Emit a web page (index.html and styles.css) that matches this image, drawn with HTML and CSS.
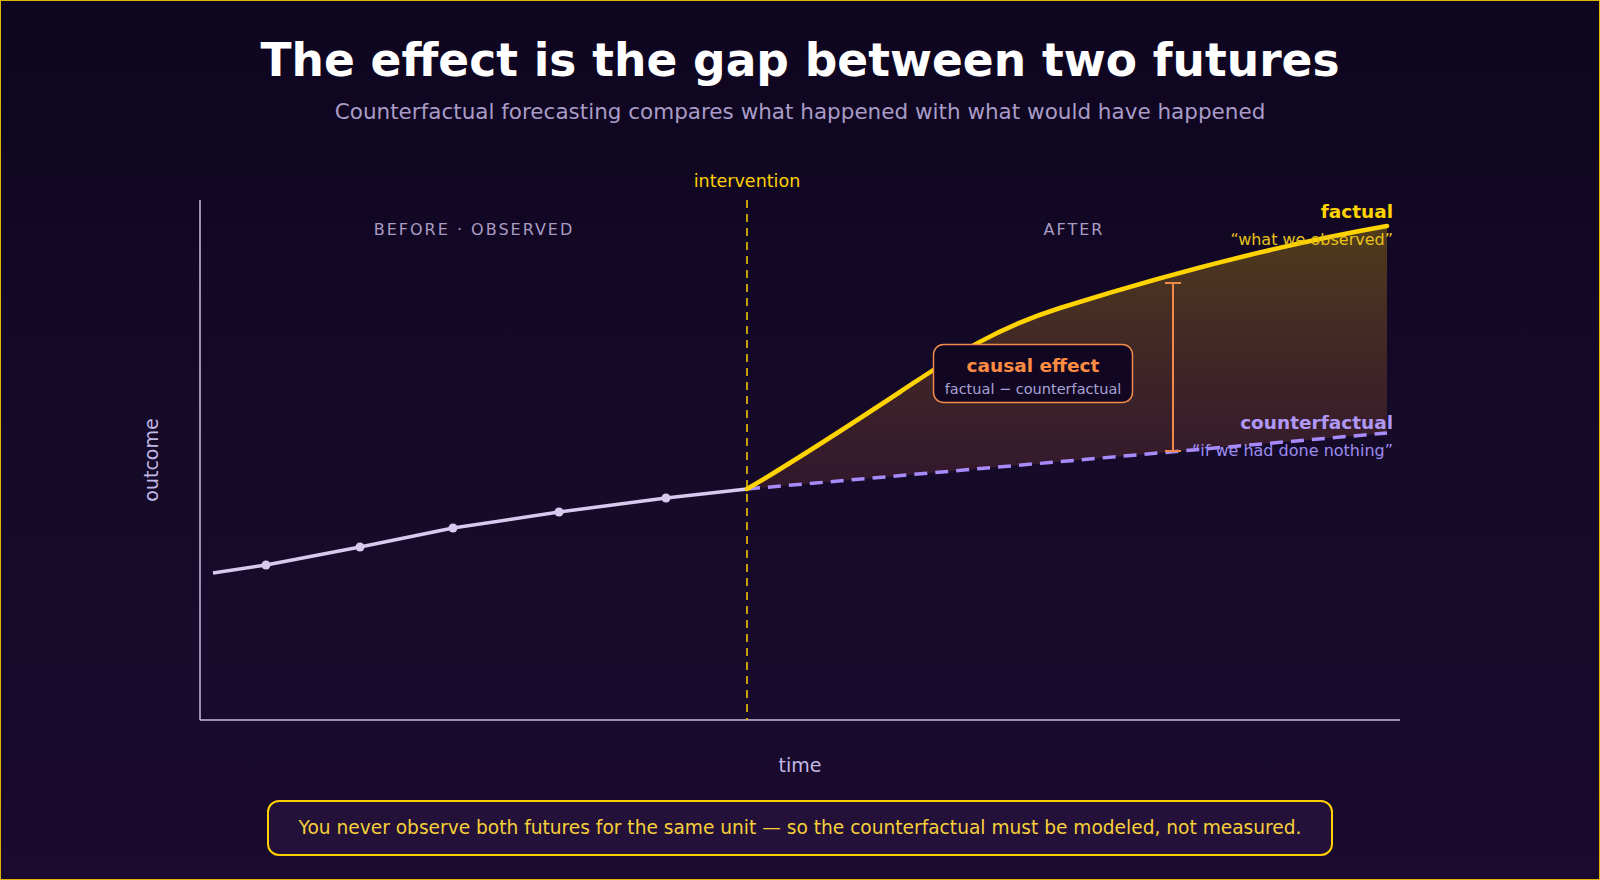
FILE: index.html
```html
<!DOCTYPE html>
<html lang="en">
<head>
<meta charset="utf-8">
<title>The effect is the gap between two futures</title>
<link rel="stylesheet" href="styles.css">
</head>
<body>
<div class="frame">
  <h1 class="title">The effect is the gap between two futures</h1>
  <p class="subtitle">Counterfactual forecasting compares what happened with what would have happened</p>

  <svg class="chart" width="1600" height="630" viewBox="0 160 1600 630" xmlns="http://www.w3.org/2000/svg">
    <defs>
      <linearGradient id="gapFill" x1="0" y1="0" x2="0" y2="1">
        <stop offset="0" stop-color="#ffd200" stop-opacity="0.26"/>
        <stop offset="1" stop-color="#ff7a48" stop-opacity="0.12"/>
      </linearGradient>
    </defs>

    <text class="intervention" x="747" y="187">intervention</text>
    <text class="phase" x="474" y="235">BEFORE · OBSERVED</text>
    <text class="phase" x="1074" y="235">AFTER</text>

    <line class="axis" x1="200" y1="200" x2="200" y2="720"/>
    <line class="axis" x1="200" y1="720" x2="1400" y2="720"/>
    <line class="divider" x1="747" y1="200" x2="747" y2="720"/>

    <path class="gap" d="M747,489 C800,458 850,425 900,392 S990,330 1060,308 S1250,250 1387,226 L1387,433 Z"/>

    <polyline class="observed" points="213,573 266,565 360,547 453,528 559,512 666,498 747,489"/>
    <g class="dots">
      <circle cx="266" cy="565" r="4.5"/>
      <circle cx="360" cy="547" r="4.5"/>
      <circle cx="453" cy="528" r="4.5"/>
      <circle cx="559" cy="512" r="4.5"/>
      <circle cx="666" cy="498" r="4.5"/>
    </g>

    <line class="cf-line" x1="747" y1="489" x2="1387" y2="433"/>
    <path class="factual-line" d="M747,489 C800,458 850,425 900,392 S990,330 1060,308 S1250,250 1387,226"/>

    <g class="bracket">
      <line x1="1173" y1="283" x2="1173" y2="451"/>
      <line x1="1165" y1="283" x2="1181" y2="283"/>
      <line x1="1165" y1="451" x2="1181" y2="451"/>
    </g>

    <rect class="effect-box" x="933.5" y="344.5" width="199" height="58" rx="10"/>
    <text class="effect-title" x="1033" y="372">causal effect</text>
    <text class="effect-sub" x="1033" y="394">factual − counterfactual</text>

    <text class="lbl-factual" x="1393" y="218">factual</text>
    <text class="lbl-factual-sub" x="1393" y="245">“what we observed”</text>
    <text class="lbl-cf" x="1393" y="429">counterfactual</text>
    <text class="lbl-cf-sub" x="1393" y="456">“if we had done nothing”</text>

    <text class="axis-label" transform="translate(158,460) rotate(-90)">outcome</text>
    <text class="axis-label" x="800" y="772">time</text>
  </svg>

  <div class="note">You never observe both futures for the same unit — so the counterfactual must be modeled, not measured.</div>
</div>
</body>
</html>
```

FILE: styles.css
```css
html, body {
  margin: 0;
  padding: 0;
}

body {
  width: 1600px;
  height: 880px;
  overflow: hidden;
  font-family: "DejaVu Sans", "Noto Sans", sans-serif;
  background: #0e0520;
}

.frame {
  box-sizing: border-box;
  width: 1600px;
  height: 880px;
  border: 1px solid #dcb600;
  background: linear-gradient(180deg, #0e0520 0%, #150a28 50%, #1a0a2e 100%);
  display: flex;
  flex-direction: column;
  align-items: center;
  padding-top: 33px;
}

.title {
  margin: 0;
  font-size: 45.5px;
  line-height: 54px;
  font-weight: 700;
  color: #ffffff;
  letter-spacing: 0;
}

.subtitle {
  margin: 12px 0 0;
  font-size: 21.5px;
  line-height: 24px;
  color: #a99cc6;
}

.chart {
  display: block;
  margin-top: 36px;
  overflow: visible;
}

.intervention {
  font-size: 17.5px;
  fill: #ffd000;
  text-anchor: middle;
}

.phase {
  font-size: 16px;
  letter-spacing: 2px;
  fill: #a99cc4;
  text-anchor: middle;
}

.axis {
  stroke: #c9bce4;
  stroke-width: 1.5;
}

.divider {
  stroke: #ffd000;
  stroke-width: 1.5;
  stroke-dasharray: 8 6;
}

.gap {
  fill: url(#gapFill);
}

.observed {
  fill: none;
  stroke: #d6cbee;
  stroke-width: 3.5;
  stroke-linejoin: round;
}

.dots circle {
  fill: #d6cbee;
}

.cf-line {
  stroke: #a78bfa;
  stroke-width: 3.5;
  stroke-dasharray: 13 8;
}

.factual-line {
  fill: none;
  stroke: #ffd400;
  stroke-width: 4.5;
  stroke-linecap: round;
}

.bracket line {
  stroke: #f08a4b;
  stroke-width: 2;
}

.effect-box {
  fill: #110722;
  stroke: #f08a4b;
  stroke-width: 1.5;
}

.effect-title {
  font-size: 18.5px;
  font-weight: 700;
  fill: #ff8c42;
  text-anchor: middle;
}

.effect-sub {
  font-size: 14.5px;
  fill: #a9a3d6;
  text-anchor: middle;
}

.lbl-factual {
  font-size: 18.5px;
  font-weight: 700;
  fill: #ffd400;
  text-anchor: end;
}

.lbl-factual-sub {
  font-size: 16px;
  fill: #e8c21a;
  text-anchor: end;
}

.lbl-cf {
  font-size: 18.5px;
  font-weight: 700;
  fill: #b098f7;
  text-anchor: end;
}

.lbl-cf-sub {
  font-size: 16px;
  fill: #9d8df1;
  text-anchor: end;
}

.axis-label {
  font-size: 19px;
  fill: #c4b8e6;
  text-anchor: middle;
}

.note {
  box-sizing: border-box;
  width: 1066px;
  height: 56px;
  margin-top: 10px;
  border: 2px solid #ffd000;
  border-radius: 12px;
  background: #231139;
  color: #f7cf3a;
  font-size: 18.6px;
  line-height: 22px;
  padding: 15px 0;
  text-align: center;
}
```
